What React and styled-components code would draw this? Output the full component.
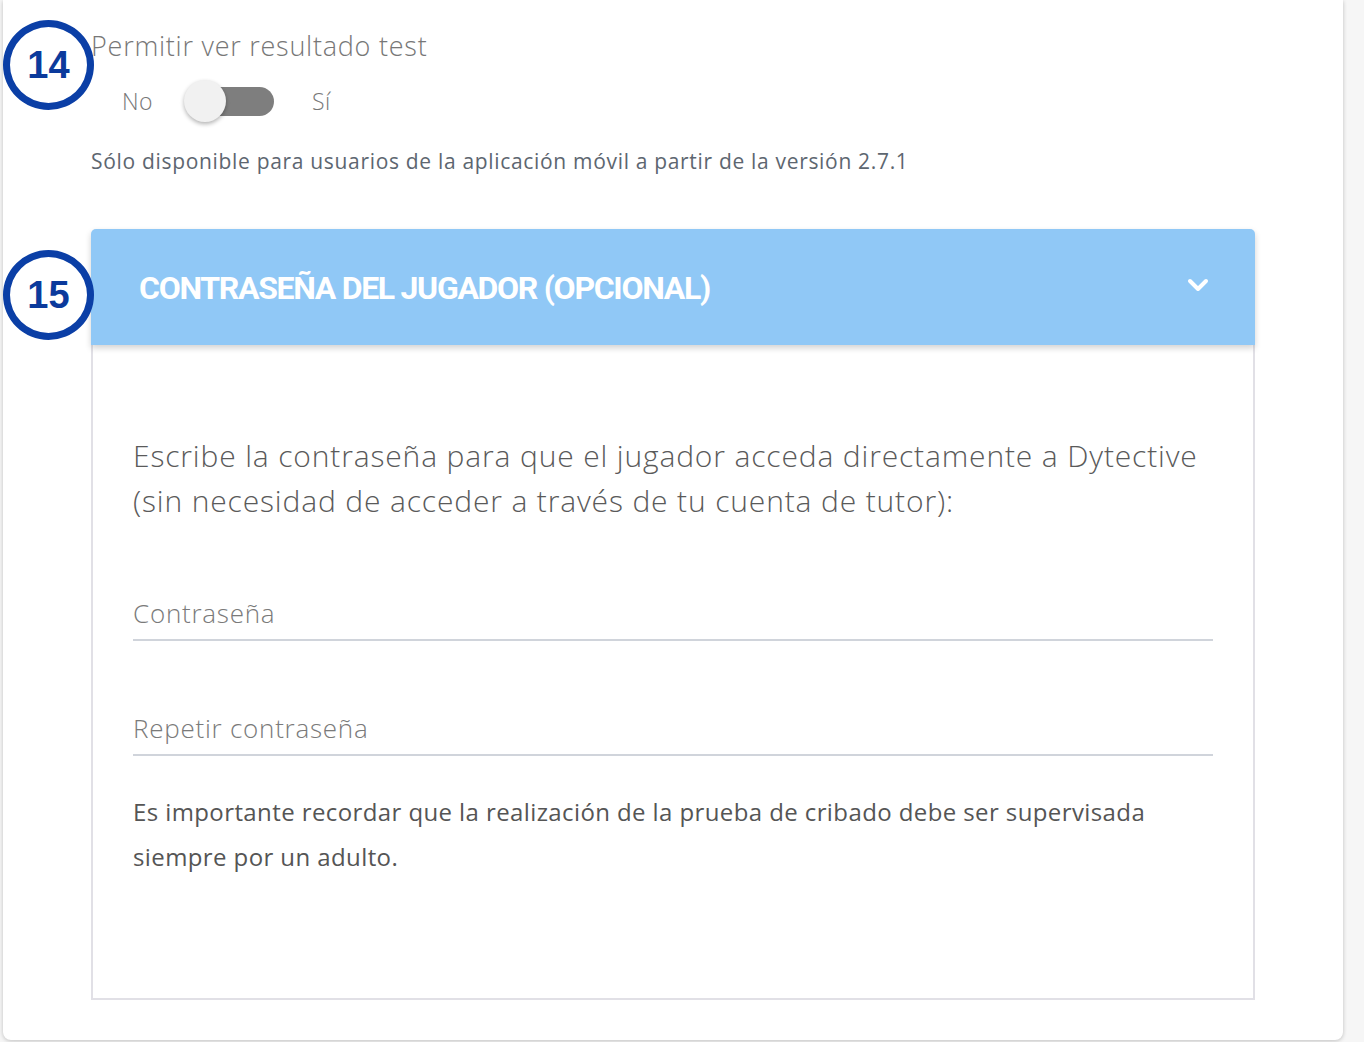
import React from "react";
import styled, { createGlobalStyle } from "styled-components";

const Global = createGlobalStyle`
  html, body { margin: 0; padding: 0; }
  body {
    background: #f6f6f6;
    font-family: "Open Sans", "Noto Sans", sans-serif;
    overflow: hidden;
  }
`;

const Page = styled.div`
  width: 1364px;
  height: 1042px;
  overflow: hidden;
  position: relative;
`;

const Card = styled.div`
  margin-left: 3px;
  width: 1340px;
  height: 1040px;
  background: #fff;
  border-radius: 0 0 8px 8px;
  box-shadow: 0 1px 4px rgba(0, 0, 0, 0.22);
  padding: 28px 88px 0 88px;
  box-sizing: border-box;
`;

const Section = styled.section`
  position: relative;
  margin-top: ${(p) => p.$mt || 0}px;
`;

const Badge = styled.div`
  position: absolute;
  left: -88px;
  top: ${(p) => p.$top}px;
  width: 91px;
  height: 90px;
  box-sizing: border-box;
  border: 7px solid #0b3fa6;
  border-radius: 50%;
  background: #fff;
  display: flex;
  align-items: center;
  justify-content: center;
  font-family: "Liberation Sans", Arial, sans-serif;
  font-weight: 700;
  font-size: 38px;
  color: #0b3a9c;
  z-index: 2;
`;

const Label = styled.div`
  font-size: 27px;
  line-height: 36px;
  font-weight: 300;
  letter-spacing: 0.75px;
  color: #777;
  position: relative;
  z-index: 3;
`;

const ToggleRow = styled.div`
  display: flex;
  align-items: center;
  height: 46px;
  margin-top: 14px;
  padding-left: 31px;
`;

const ToggleText = styled.span`
  font-size: 23px;
  font-weight: 300;
  letter-spacing: 0.5px;
  color: #777;
`;

const Switch = styled.div`
  position: relative;
  width: 90px;
  height: 42px;
  margin: 0 38px 0 31px;
`;

const Track = styled.div`
  position: absolute;
  left: 4px;
  right: 0;
  top: 7px;
  height: 29px;
  border-radius: 15px;
  background: #7e7e7e;
`;

const Knob = styled.div`
  position: absolute;
  left: 0;
  top: 0;
  width: 42px;
  height: 42px;
  border-radius: 50%;
  background: #f1f1f1;
  box-shadow: 0 2px 4px rgba(0, 0, 0, 0.3);
`;

const Note = styled.div`
  margin-top: 22px;
  font-size: 21px;
  line-height: 30px;
  font-weight: 500;
  letter-spacing: 0.68px;
  color: #5d6670;
`;

const AccHeader = styled.div`
  height: 116px;
  background: #90c8f6;
  border-radius: 5px 5px 0 0;
  box-shadow: 0 3px 6px rgba(0, 0, 0, 0.18);
  display: flex;
  align-items: center;
  justify-content: space-between;
  padding: 0 46px 0 48px;
  position: relative;
  z-index: 1;
`;

const AccTitle = styled.div`
  font-family: "Roboto", sans-serif;
  font-weight: 700;
  font-size: 32px;
  color: #fff;
  letter-spacing: -1.3px;
  padding-top: 2px;
`;

const ChevronWrap = styled.div`
  display: flex;
  margin-top: -4px;
`;

const AccBody = styled.div`
  border: 2px solid #e1e0e6;
  border-top: none;
  padding: 88px 40px 119px 40px;
`;

const Para = styled.p`
  margin: 0;
  font-size: 30px;
  line-height: 45px;
  font-weight: 300;
  letter-spacing: 0.85px;
  color: #5a5a5a;
`;

const Field = styled.input`
  display: block;
  width: 100%;
  box-sizing: border-box;
  height: 48px;
  margin-top: ${(p) => p.$mt}px;
  border: none;
  border-bottom: 2px solid #d0d4db;
  padding: 0 0 6px 0;
  font-family: inherit;
  font-size: 26px;
  font-weight: 300;
  letter-spacing: 0.75px;
  color: #555;
  background: transparent;
  outline: none;
  &::placeholder { color: #7a7a7a; }
`;

const Warning = styled.p`
  margin: 33px 0 0 0;
  font-size: 24px;
  line-height: 45px;
  font-weight: 500;
  letter-spacing: 0.4px;
  color: #555;
`;

const Chevron = () => (
  <svg width="22" height="14" viewBox="0 0 22 14">
    <polyline points="3,3 11,11 19,3" fill="none" stroke="#fff" strokeWidth="4" strokeLinecap="round" strokeLinejoin="round" />
  </svg>
);

export default function App() {
  return (
    <Page>
      <Global />
      <Card>
        <Section>
          <Badge $top={-8}>14</Badge>
          <Label>Permitir ver resultado test</Label>
          <ToggleRow>
            <ToggleText>No</ToggleText>
            <Switch>
              <Track />
              <Knob />
            </Switch>
            <ToggleText>Sí</ToggleText>
          </ToggleRow>
          <Note>Sólo disponible para usuarios de la aplicación móvil a partir de la versión 2.7.1</Note>
        </Section>
        <Section $mt={53}>
          <Badge $top={21}>15</Badge>
          <AccHeader>
            <AccTitle>CONTRASEÑA DEL JUGADOR (OPCIONAL)</AccTitle>
            <ChevronWrap>
              <Chevron />
            </ChevronWrap>
          </AccHeader>
          <AccBody>
            <Para>
              Escribe la contraseña para que el jugador acceda directamente a Dytective (sin necesidad de acceder a través de tu cuenta de tutor):
            </Para>
            <Field $mt={70} type="password" placeholder="Contraseña" />
            <Field $mt={67} type="password" placeholder="Repetir contraseña" />
            <Warning>
              Es importante recordar que la realización de la prueba de cribado debe ser supervisada siempre por un adulto.
            </Warning>
          </AccBody>
        </Section>
      </Card>
    </Page>
  );
}
